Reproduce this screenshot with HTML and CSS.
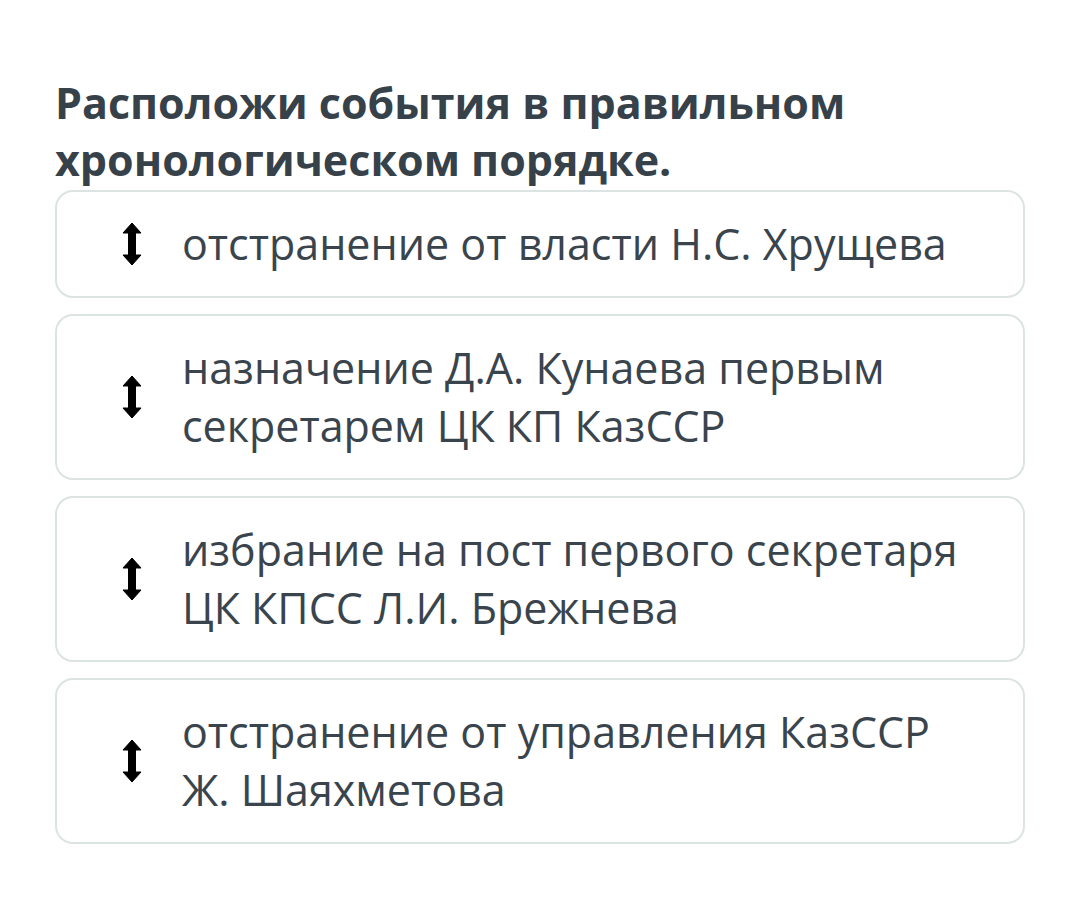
FILE: index.html
```html
<!DOCTYPE html>
<html lang="ru">
<head>
<meta charset="utf-8">
<link rel="stylesheet" href="styles.css">
</head>
<body>
<div class="page">
  <h1 class="title">Расположи события в правильном хронологическом порядке.</h1>
  <div class="list">
    <div class="card">
      <svg class="icon" viewBox="0 0 20 44"><path d="M10 1 L19 11 L13.5 11 L13.5 33 L19 33 L10 43 L1 33 L6.5 33 L6.5 11 L1 11 Z" fill="#000" stroke="#000" stroke-width="1" stroke-linejoin="round"/></svg>
      <div class="text">отстранение от власти Н.С. Хрущева</div>
    </div>
    <div class="card">
      <svg class="icon" viewBox="0 0 20 44"><path d="M10 1 L19 11 L13.5 11 L13.5 33 L19 33 L10 43 L1 33 L6.5 33 L6.5 11 L1 11 Z" fill="#000" stroke="#000" stroke-width="1" stroke-linejoin="round"/></svg>
      <div class="text">назначение Д.А. Кунаева первым секретарем ЦК КП КазССР</div>
    </div>
    <div class="card">
      <svg class="icon" viewBox="0 0 20 44"><path d="M10 1 L19 11 L13.5 11 L13.5 33 L19 33 L10 43 L1 33 L6.5 33 L6.5 11 L1 11 Z" fill="#000" stroke="#000" stroke-width="1" stroke-linejoin="round"/></svg>
      <div class="text">избрание на пост первого секретаря ЦК КПСС Л.И. Брежнева</div>
    </div>
    <div class="card">
      <svg class="icon" viewBox="0 0 20 44"><path d="M10 1 L19 11 L13.5 11 L13.5 33 L19 33 L10 43 L1 33 L6.5 33 L6.5 11 L1 11 Z" fill="#000" stroke="#000" stroke-width="1" stroke-linejoin="round"/></svg>
      <div class="text">отстранение от управления КазССР Ж. Шаяхметова</div>
    </div>
  </div>
</div>
</body>
</html>
```
FILE: styles.css
```css
html, body {
  margin: 0;
  padding: 0;
  background: #ffffff;
}
.page {
  padding: 74px 55px 0 55px;
  font-family: "Open Sans", "Noto Sans", sans-serif;
}
.title {
  margin: 0 0 2px 0;
  font-size: 43px;
  line-height: 57px;
  font-weight: 700;
  color: #37414a;
}
.list {
  display: flex;
  flex-direction: column;
  gap: 16px;
}
.card {
  display: flex;
  align-items: center;
  border: 2px solid #dce3e3;
  border-radius: 18px;
  padding: 23px 55px 23px 65px;
}
.icon {
  width: 20px;
  height: 44px;
  flex: none;
  margin-right: 40px;
}
.text {
  font-size: 43px;
  line-height: 58px;
  color: #3a444d;
}
```
